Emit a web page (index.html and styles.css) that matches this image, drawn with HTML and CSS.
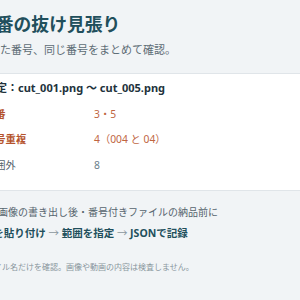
FILE: index.html
```html
<!DOCTYPE html>
<html lang="ja">
<head>
  <meta charset="UTF-8" />
  <meta name="viewport" content="width=device-width, initial-scale=1.0" />
  <title>連番の抜け見張り</title>
  <link rel="stylesheet" href="styles.css">
</head>
<body>
  <div class="page">
    <header class="intro">
      <h1>連番の抜け見張り</h1>
      <p class="lead">抜けた番号、同じ番号をまとめて確認。</p>
    </header>

    <section class="report">
      <div class="range">指定：cut_001.png 〜 cut_005.png</div>
      <div class="row warn">
        <span class="label">欠番</span>
        <span class="value">3・5</span>
      </div>
      <div class="row warn">
        <span class="label">番号重複</span>
        <span class="value">4（004 と 04）</span>
      </div>
      <div class="row muted">
        <span class="label">範囲外</span>
        <span class="value">8</span>
      </div>
    </section>

    <section class="usage">
      <p class="when">連番画像の書き出し後・番号付きファイルの納品前に</p>
      <p class="steps">txtを貼り付け <span class="arrow">→</span> 範囲を指定 <span class="arrow">→</span> JSONで記録</p>
      <p class="note">ファイル名だけを確認。画像や動画の内容は検査しません。</p>
    </section>
  </div>
</body>
</html>
```

FILE: styles.css
```css
body {
  margin: 0;
  font-family: "Noto Sans", "Noto Sans CJK JP", sans-serif;
  background: #f1f4f6;
  display: flex;
  justify-content: center;
  min-height: 100vh;
}
.page {
  flex: none;
  width: 360px;
}
.intro {
  padding: 12px 8px 15px;
}
.intro h1 {
  margin: 0;
  font-size: 17.8px;
  line-height: 24px;
  font-weight: 700;
  color: #214f5c;
}
.lead {
  margin: 6px 0 0;
  font-size: 11px;
  line-height: 16px;
  color: #5d6c75;
}
.report {
  background: #fff;
  border-top: 1px solid #e0e5e9;
  border-bottom: 1px solid #e0e5e9;
  padding: 6px 15px 17px;
  display: flex;
  flex-direction: column;
  gap: 9.5px;
}
.range {
  font-size: 11px;
  line-height: 16px;
  font-weight: 700;
  color: #22323c;
}
.row {
  display: grid;
  grid-template-columns: 109px 1fr;
  font-size: 10.3px;
  line-height: 16px;
}
.row.warn .label {
  color: #b5532c;
  font-weight: 700;
}
.row.warn .value {
  color: #c0653f;
}
.row.muted .label {
  color: #56646c;
}
.row.muted .value {
  color: #6b7f8b;
}
.usage {
  padding: 13.5px 8px 0;
}
.usage p {
  margin: 0;
}
.when {
  font-size: 10px;
  line-height: 16px;
  color: #56656e;
}
.steps {
  margin-top: 4.5px !important;
  font-size: 10.5px;
  line-height: 16px;
  font-weight: 700;
  color: #214f5c;
}
.arrow {
  font-weight: 400;
  color: #8a979e;
}
.note {
  margin-top: 20px !important;
  font-size: 8px;
  line-height: 12px;
  color: #89969d;
}
```
